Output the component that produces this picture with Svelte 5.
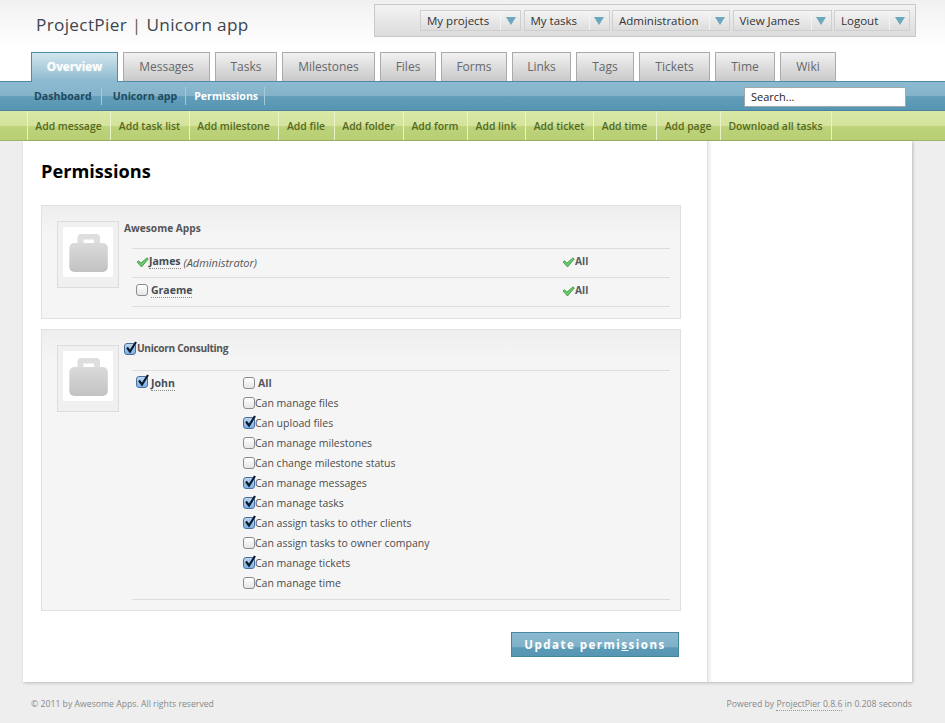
<script>
  const menus = [
    { label: "My projects", width: 101 },
    { label: "My tasks", width: 86 },
    { label: "Administration", width: 118 },
    { label: "View James", width: 99 },
    { label: "Logout", width: 76 },
  ];

  const tabs = [
    { label: "Overview", width: 87, active: true },
    { label: "Messages", width: 87 },
    { label: "Tasks", width: 62 },
    { label: "Milestones", width: 93 },
    { label: "Files", width: 56 },
    { label: "Forms", width: 66 },
    { label: "Links", width: 59 },
    { label: "Tags", width: 58 },
    { label: "Tickets", width: 71 },
    { label: "Time", width: 60 },
    { label: "Wiki", width: 56 },
  ];

  const actions = [
    { label: "Add message", width: 83 },
    { label: "Add task list", width: 79 },
    { label: "Add milestone", width: 89 },
    { label: "Add file", width: 56 },
    { label: "Add folder", width: 69 },
    { label: "Add form", width: 64 },
    { label: "Add link", width: 58 },
    { label: "Add ticket", width: 68 },
    { label: "Add time", width: 63 },
    { label: "Add page", width: 64 },
    { label: "Download all tasks", width: 112 },
  ];

  const permissions = [
    ["Can manage files", false],
    ["Can upload files", true],
    ["Can manage milestones", false],
    ["Can change milestone status", false],
    ["Can manage messages", true],
    ["Can manage tasks", true],
    ["Can assign tasks to other clients", true],
    ["Can assign tasks to owner company", false],
    ["Can manage tickets", true],
    ["Can manage time", false],
  ];
</script>

{#snippet box(checked)}
  <span class="box" class:checked>
    {#if checked}
      <svg viewBox="0 0 14 14" width="14" height="14">
        <path d="M3 6.5 L6 10.5 L12 1" fill="none" stroke="#0c1c30" stroke-width="2.2" />
      </svg>
    {/if}
  </span>
{/snippet}

{#snippet tick()}
  <svg class="tick" viewBox="0 0 13 11" width="13" height="11">
    <path d="M1 5 L2.5 3.8 L5 6 L11 0.8 L12.3 2 L5.5 10 Z" fill="#6bc96a" stroke="#37963f" stroke-width="0.8" />
  </svg>
{/snippet}

{#snippet logo()}
  <div class="logo">
    <div class="logo-inner">
      <svg viewBox="0 0 50 50" width="50" height="50">
        <defs>
          <linearGradient id="bag" x1="0" y1="0" x2="0" y2="1">
            <stop offset="0" stop-color="#dadada" />
            <stop offset="1" stop-color="#c2c2c2" />
          </linearGradient>
        </defs>
        <path fill-rule="evenodd" d="M14.5 18 V11 Q14.5 7 18.5 7 H33 Q37 7 37 11 V18 Z M20.5 12.5 V16 H31 V12.5 Z" fill="#dedede" />
        <rect x="6.3" y="16" width="38.5" height="29" rx="5" fill="url(#bag)" />
      </svg>
    </div>
  </div>
{/snippet}

<header class="top">
  <div class="title-row">
    <h1>ProjectPier <span class="sep">|</span> Unicorn app</h1>
    <nav class="user-box">
      {#each menus as m}
        <div class="menu" style="width:{m.width}px">
          <span class="menu-label">{m.label}</span>
          <span class="menu-arrow"><i></i></span>
        </div>
      {/each}
    </nav>
  </div>
  <nav class="tabs">
    {#each tabs as t}
      <div class="tab" class:active={t.active} style="width:{t.width}px">{t.label}</div>
    {/each}
  </nav>
</header>

<div class="crumbs">
  <div class="crumb-links">
    <span class="crumb">Dashboard</span>
    <span class="crumb">Unicorn app</span>
    <span class="crumb current">Permissions</span>
  </div>
  <div class="search">Search...</div>
</div>

<div class="actions">
  {#each actions as a}
    <div class="action" style="width:{a.width}px">{a.label}</div>
  {/each}
</div>

<div class="page">
  <main class="content">
    <h2>Permissions</h2>

    <section class="company first">
      {@render logo()}
      <div class="company-body">
        <div class="company-name">Awesome Apps</div>
        <div class="user-rows">
          <div class="user-row">
            <div class="who">
              {@render tick()}
              <span class="name">James</span>
              <em>(Administrator)</em>
            </div>
            <div class="perm-all">{@render tick()}<b>All</b></div>
          </div>
          <div class="user-row">
            <div class="who">
              {@render box(false)}
              <span class="name">Graeme</span>
            </div>
            <div class="perm-all">{@render tick()}<b>All</b></div>
          </div>
        </div>
      </div>
    </section>

    <section class="company">
      {@render logo()}
      <div class="company-body">
        <div class="company-name with-box">{@render box(true)}Unicorn Consulting</div>
        <div class="john">
          <div class="john-name">
            {@render box(true)}
            <span class="name">John</span>
          </div>
          <div class="perm-list">
            <div class="perm all-row">{@render box(false)}<b>All</b></div>
            {#each permissions as [label, on]}
              <div class="perm">{@render box(on)}{label}</div>
            {/each}
          </div>
        </div>
      </div>
    </section>

    <div class="submit-row">
      <button class="submit">Update permi<u>s</u>sions</button>
    </div>
  </main>
  <aside class="sidebar"></aside>
</div>

<footer class="foot">
  <span>© 2011 by Awesome Apps. All rights reserved</span>
  <span>Powered by <span class="foot-link">ProjectPier 0.8.6</span> in 0.208 seconds</span>
</footer>

<style>
  :global(body) {
    background: #eeeeee;
    font-family: "Open Sans", "Liberation Sans", sans-serif;
    font-size: 11px;
    color: #444;
  }

  .top {
    height: 81px;
    background: linear-gradient(#f1f1f1, #ffffff 60%);
    position: relative;
  }

  .title-row {
    display: flex;
    justify-content: space-between;
    padding: 4px 29px 0 36px;
    height: 48px;
    box-sizing: border-box;
  }

  h1 {
    margin: 9px 0 0;
    font-size: 17.2px;
    line-height: 24px;
    font-weight: 400;
    color: #3d4550;
    letter-spacing: 0.33px;
  }

  .sep {
    color: #6b5a4a;
  }

  .user-box {
    box-sizing: border-box;
    width: 542px;
    height: 33px;
    display: flex;
    justify-content: flex-end;
    gap: 2.5px;
    padding: 5px 5px 0 0;
    border: 1px solid #c8c8c8;
    background: linear-gradient(#f3f3f3, #dcdcdc);
  }

  .menu {
    box-sizing: border-box;
    height: 21px;
    display: flex;
    border: 1px solid #cfcfcf;
    background: linear-gradient(#f4f4f4, #dddddd);
    color: #333;
    font-size: 11.5px;
    line-height: 19px;
  }

  .menu-label {
    flex: 1;
    padding-left: 6px;
    white-space: nowrap;
    border-right: 1px solid #f4f4f4;
  }

  .menu-arrow {
    width: 19px;
    display: flex;
    align-items: center;
    justify-content: center;
  }

  .menu-arrow i {
    width: 0;
    height: 0;
    border-left: 5.5px solid transparent;
    border-right: 5.5px solid transparent;
    border-top: 8px solid #6ba7bf;
  }

  .tabs {
    display: flex;
    gap: 5px;
    padding-left: 31px;
    height: 29px;
    position: absolute;
    left: 0;
    bottom: 0;
  }

  .tab {
    box-sizing: border-box;
    height: 29px;
    text-align: center;
    font-size: 12px;
    line-height: 28px;
    color: #66686b;
    border: 1px solid #aaaaaa;
    border-bottom: 0;
    background: linear-gradient(#f1f1f1, #c9c9c9);
  }

  .tab.active {
    height: 30px;
    margin-bottom: -1px;
    position: relative;
    font-size: 11.7px;
    font-weight: 700;
    line-height: 27px;
    color: #fff;
    border-color: #4e8ba5;
    background: linear-gradient(#d3e6ee, #8ab8cd);
    text-shadow: 0 0 2px rgba(255, 255, 255, 0.5);
  }

  .crumbs {
    box-sizing: border-box;
    height: 30px;
    display: flex;
    justify-content: space-between;
    padding: 5px 39px 0 34px;
    border-top: 1px solid #4e8ba5;
    border-bottom: 1px solid #4d8199;
    background: linear-gradient(#8cbad0 0, #84b3c9 50%, #639db8 52%, #5596b3 100%);
  }

  .crumb-links {
    display: flex;
    font-size: 10.6px;
    font-weight: 700;
    line-height: 18px;
    color: #1e4a60;
  }

  .crumb {
    padding-right: 9px;
    margin-right: 11px;
    border-right: 1px solid #a5cbdb;
    height: 18px;
  }

  .crumb + .crumb {
    padding-right: 8px;
    margin-right: 8px;
  }

  .crumb.current {
    color: #fff;
    margin-right: 0;
    padding-right: 6px;
  }

  .search {
    box-sizing: border-box;
    width: 162px;
    height: 20px;
    padding-left: 6px;
    background: #fff;
    border: 1px solid #9fa8ad;
    color: #222;
    font-size: 11px;
    line-height: 18px;
  }

  .actions {
    box-sizing: border-box;
    height: 30px;
    display: flex;
    padding-left: 26.5px;
    border-bottom: 1px solid #9db566;
    background: linear-gradient(#d9e8a4, #d3e39c 50%, #bdd27a 54%, #b8cf74);
  }

  .action {
    box-sizing: border-box;
    text-align: center;
    font-size: 10.4px;
    font-weight: 600;
    line-height: 31px;
    color: #56691f;
    white-space: nowrap;
    border-left: 1px solid #e9f2c8;
  }

  .action:last-child {
    border-right: 1px solid #e9f2c8;
  }

  .page {
    display: flex;
    margin: 0 33px 0 23px;
    height: 541px;
    background: #fff;
    box-shadow: 1px 1px 3px rgba(0, 0, 0, 0.22);
  }

  .content {
    box-sizing: border-box;
    width: 684px;
    padding: 17px 25px 0 18px;
    background: #fff;
  }

  .sidebar {
    flex: 1;
    background: linear-gradient(90deg, #e0e0e0, #f6f6f6 3px, #ffffff 6px);
  }

  h2 {
    margin: 0 0 21px;
    font-size: 18.2px;
    line-height: 26px;
    font-weight: 700;
    color: #000;
  }

  .company {
    box-sizing: border-box;
    display: flex;
    align-items: flex-start;
    gap: 5px;
    width: 640px;
    margin-bottom: 10px;
    padding: 15px 10px 0 15px;
    border: 1px solid #e0e0e0;
    background: linear-gradient(#eeeeee, #f5f5f5 30px);
    height: 282px;
  }

  .company.first {
    height: 114px;
  }

  .logo {
    box-sizing: border-box;
    width: 62px;
    height: 67px;
    padding: 5px;
    border: 1px solid #dcdcdc;
    background: #f0f0f0;
    flex: none;
  }

  .logo-inner {
    width: 50px;
    height: 50px;
    background: #fff;
  }

  .company-body {
    flex: 1;
  }

  .company-name {
    height: 28px;
    margin-top: -1px;
    font-size: 10.2px;
    font-weight: 700;
    line-height: 17px;
    color: #555;
  }

  .company-name.with-box {
    display: flex;
    align-items: flex-start;
    height: 29px;
    margin-top: -4px;
    line-height: 15px;
    letter-spacing: -0.35px;
  }

  .company-name.with-box .box {
    margin: 2px 1px 0 0;
  }

  .user-rows {
    margin-left: 8px;
    border-top: 1px solid #dddddd;
  }

  .user-row {
    height: 29px;
    box-sizing: border-box;
    display: flex;
    align-items: center;
    border-bottom: 1px solid #dddddd;
    padding: 0 0 4px 4px;
  }

  .who {
    width: 426px;
    display: flex;
    align-items: center;
  }

  .who .box {
    margin-right: 3px;
  }

  .name {
    font-weight: 700;
    color: #444c55;
    font-size: 10.5px;
    line-height: 14px;
    border-bottom: 1px dotted #888;
  }

  .who em {
    color: #555;
    font-size: 11px;
    margin-left: 3px;
    padding-top: 2px;
  }

  .perm-all {
    display: flex;
    align-items: center;
    font-size: 10.2px;
    color: #55595e;
  }

  .tick {
    flex: none;
    margin-top: 3px;
  }

  .box {
    box-sizing: border-box;
    display: inline-block;
    flex: none;
    width: 12px;
    height: 12px;
    border: 1px solid #8b8b8b;
    border-radius: 3px;
    background: linear-gradient(#ffffff, #e6e6e6);
    position: relative;
  }

  .box.checked {
    border-color: #4a6f9e;
    background: linear-gradient(#bcd6f0, #7fb0e4);
  }

  .box svg {
    position: absolute;
    left: -1px;
    top: -3px;
  }

  .john {
    display: flex;
    margin-left: 8px;
    border-top: 1px solid #dddddd;
    border-bottom: 1px solid #dddddd;
    padding: 2px 0 6px 4px;
  }

  .john-name {
    width: 107px;
    height: 17px;
    display: flex;
    align-items: flex-start;
    gap: 3px;
    padding-top: 3px;
  }

  .perm-list {
    display: flex;
    flex-direction: column;
    flex: 1;
  }

  .perm {
    height: 20px;
    display: flex;
    align-items: center;
    font-size: 10.5px;
    color: #4c4c4c;
  }

  .perm.all-row {
    gap: 3px;
  }

  .perm.all-row b {
    color: #55595e;
  }

  .submit-row {
    display: flex;
    justify-content: flex-end;
    padding-top: 11px;
    width: 638px;
  }

  .submit {
    box-sizing: border-box;
    width: 168px;
    height: 25px;
    padding: 0;
    border: 1px solid #44869f;
    background: linear-gradient(#8cbad0, #7fb0c7 60%, #5a9ab6 64%, #5596b3);
    color: #fff;
    font-family: inherit;
    font-size: 11.5px;
    font-weight: 700;
    letter-spacing: 1.5px;
  }

  .foot {
    display: flex;
    justify-content: space-between;
    margin: 0 33px 0 31px;
    padding-top: 15px;
    font-size: 8.7px;
    line-height: 14px;
    color: #888888;
  }

  .foot-link {
    border-bottom: 1px dotted #999;
  }
</style>
